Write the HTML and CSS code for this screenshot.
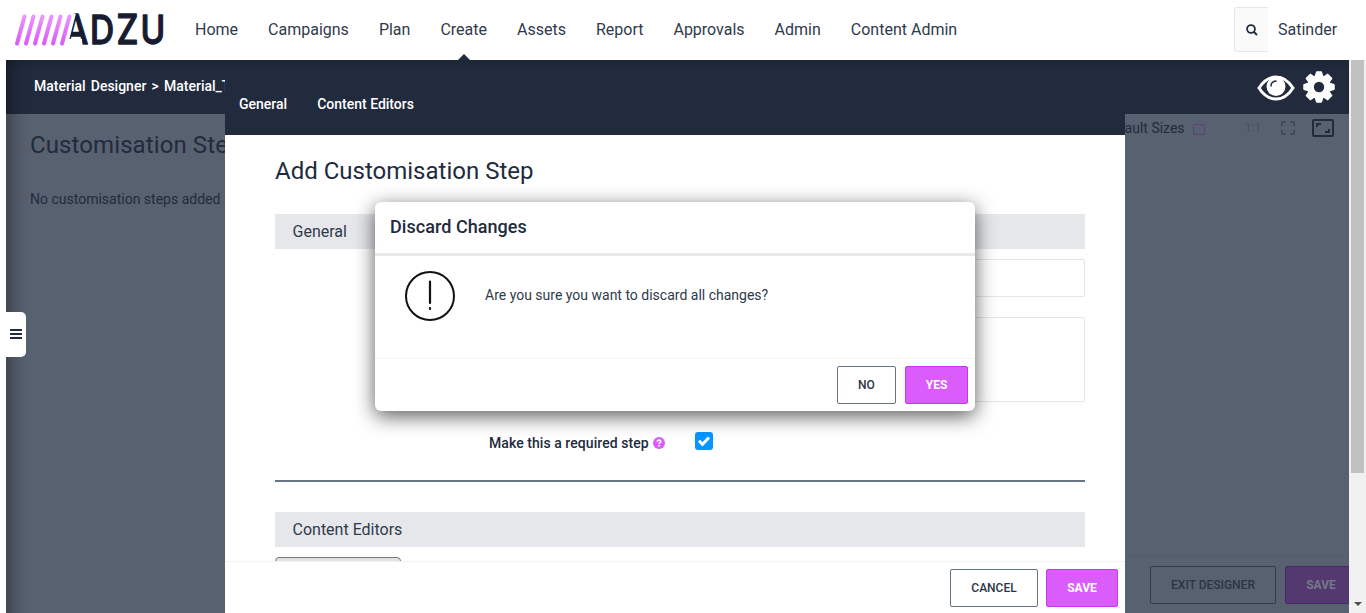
FILE: index.html
```html
<!DOCTYPE html>
<html lang="en">
<head>
<meta charset="utf-8">
<title>Adzu</title>
<link rel="stylesheet" href="styles.css">
</head>
<body>
<header class="header">
  <svg class="logo" width="154" height="34" viewBox="0 0 154 34">
    <defs><linearGradient id="pink" gradientUnits="userSpaceOnUse" x1="0" y1="2" x2="0" y2="32"><stop offset="0" stop-color="#ef96ff"/><stop offset="1" stop-color="#d957fa"/></linearGradient></defs>
    <g class="logo-text"><text transform="translate(49.500 31) scale(.92 1.060)">A</text><text transform="translate(76 31) scale(.88 1.060)">D</text><text transform="translate(102.500 31) scale(.9 1.060)">Z</text><text transform="translate(126.500 31) scale(.88 1.060)">U</text></g>
    <path d="M44 26H68V34H44Z" fill="#fff"/>
    <path d="M58.500 0L50.500 31" stroke="#fff" stroke-width="7"/>
    <path d="M10.500 3.500L3 30.500M19.500 3.500L12 30.500M28.500 3.500L21 30.500M37.500 3.500L30 30.500M46.500 3.500L39 30.500M55.500 3.500L48 30.500" fill="none" stroke="url(#pink)" stroke-width="4" stroke-linecap="round"/>
  </svg>
  <nav class="nav">
    <a>Home</a><a>Campaigns</a><a>Plan</a><a class="active">Create</a><a>Assets</a><a>Report</a><a>Approvals</a><a>Admin</a><a>Content Admin</a>
  </nav>
  <button class="search"><svg width="12" height="12" viewBox="0 0 12 12"><circle cx="5" cy="5" r="3.900"/><path d="M8 8l3 3"/></svg></button>
  <span class="user">Satinder</span>
</header>
<main class="main">
  <div class="workspace">
    <div class="topbar">
      <span class="crumbs">Material Designer &gt; Material_T</span>
      <svg class="eye" width="38" height="26" viewBox="0 0 38 26"><path d="M2 13Q9 2 19 2T36 13Q29 24 19 24T2 13Z" fill="none" stroke="#fff" stroke-width="3"/><circle cx="19" cy="11.500" r="9.500" fill="#fff"/><path d="M14 11Q14 6.500 19 6" fill="none" stroke="#212b3d" stroke-width="1.500" stroke-linecap="round"/></svg>
      <svg class="gear" width="32" height="32" viewBox="0 0 32 32"><g fill="#fff" stroke="#fff" stroke-linejoin="round"><circle cx="16" cy="16" r="11.500"/><path d="M12 6L13.500 .8H18.500L20 6V26L18.500 31.200H13.500L12 26Z"/><path d="M12 6L13 .8H19L20 6V26L19 31.200H13L12 26Z" transform="rotate(45 16 16)"/><path d="M12 6L13.500 .8H18.500L20 6V26L18.500 31.200H13.500L12 26Z" transform="rotate(90 16 16)"/><path d="M12 6L13 .8H19L20 6V26L19 31.200H13L12 26Z" transform="rotate(135 16 16)"/></g><circle cx="16" cy="16" r="5.200" fill="#212b3d"/></svg>
    </div>
    <div class="canvas">
      <div class="steps">
        <h2 class="steps-title">Customisation Steps</h2>
        <p class="steps-empty">No customisation steps added</p>
      </div>
      <div class="tools">
        <span class="sizes">Default Sizes</span><span class="size-check"></span><span class="ratio">1:1</span>
        <svg class="fit" width="14" height="14" viewBox="0 0 14 14"><path d="M1 5V1H5M9 1H13V5M13 9V13H9M5 13H1V9"/></svg>
        <svg class="frame" width="22" height="18" viewBox="0 0 22 18"><rect x="1" y="1" width="20" height="16" rx="1"/><path d="M5 8V5H9M17 10V13H13"/></svg>
      </div>
      <div class="canvas-foot"><button class="btn exit">EXIT DESIGNER</button><button class="btn dim-save">SAVE</button></div>
    </div>
    <button class="drawer"><i></i><i></i><i></i></button>
    <div class="edge"></div>
  </div>
  <div class="scrollbar"><div class="thumb"></div><div class="arrow"></div></div>
</main>
<section class="panel">
  <div class="tabs"><span>General</span><span>Content Editors</span></div>
  <div class="form">
    <h1 class="form-title">Add Customisation Step</h1>
    <h3 class="band">General</h3>
    <div class="fields"><div class="input"></div><div class="textarea"></div></div>
    <div class="required"><span class="required-label">Make this a required step</span>
      <svg class="help" width="12" height="12" viewBox="0 0 12 12"><circle cx="6" cy="6" r="6" fill="#da5cfb"/><path d="M4.200 4.600Q4.300 3 6 3T7.800 4.500Q7.800 5.400 6.800 5.900Q6 6.300 6 7" fill="none" stroke="#fff" stroke-width="1.600"/><rect x="5.200" y="8" width="1.600" height="1.600" fill="#fff"/></svg>
      <span class="check"><svg width="18" height="18" viewBox="0 0 18 18"><path d="M4 8.800L7.500 12.300L14 5.500"/></svg></span>
    </div>
    <h3 class="band second">Content Editors</h3>
    <div class="stub"></div>
  </div>
  <div class="panel-foot"><button class="btn cancel">CANCEL</button><button class="btn primary save">SAVE</button></div>
</section>
<section class="dialog">
  <h2 class="dialog-title">Discard Changes</h2>
  <div class="dialog-body">
    <svg width="50" height="50" viewBox="0 0 50 50"><circle cx="25" cy="25" r="24" fill="none" stroke="#111" stroke-width="2"/><path d="M25 10.500V32M25 37V38" stroke="#111" stroke-width="2.200" stroke-linecap="round"/></svg>
    <p>Are you sure you want to discard all changes?</p>
  </div>
  <div class="dialog-foot"><button class="btn no">NO</button><button class="btn primary yes">YES</button></div>
</section>
</body>
</html>
```
FILE: styles.css
```css
* { box-sizing: border-box; }
body { margin: 0; width: 1366px; height: 613px; overflow: hidden; position: relative; background: #fff; color: #212b3d; font-family: Roboto, sans-serif; font-size: 14px; }
h1, h2, h3, p { margin: 0; font-weight: 400; }
.header { height: 60px; display: flex; align-items: center; padding-left: 14px; }
.logo { flex: none; }
.logo-text { font: 500 38px Inter, sans-serif; fill: #171c30; stroke: #171c30; stroke-width: 1.200; stroke-linejoin: round; }
.nav { display: flex; gap: 30px; margin-left: 27px; height: 60px; line-height: 60px; font-size: 16px; color: #2f3a4c; white-space: nowrap; }
.active { position: relative; }
.active::after { content: ""; position: absolute; left: 50%; bottom: 0; margin-left: -6px; border: 6px solid transparent; border-top: 0; border-bottom-color: #212b3d; }
.search { width: 34px; height: 45px; margin: 0 0 2px auto; padding: 0; background: #fafafa; border: 1px solid #e7e7e9; border-right: 0; border-radius: 3px 0 0 3px; }
.search svg { fill: none; stroke: #212b3d; stroke-width: 1.800; vertical-align: middle; }
.user { width: 98px; padding: 0 0 2px 10px; font-size: 16px; color: #2f3a4c; }
.main { display: flex; height: 553px; padding-left: 6px; }
.workspace { width: 1343px; position: relative; overflow: hidden; display: flex; flex-direction: column; }
.topbar { height: 54px; flex: none; display: flex; align-items: center; background: linear-gradient(#1d2636, #212b3d 12px); color: #fff; padding: 0 14px 0 28px; }
.crumbs { width: 192px; overflow: hidden; white-space: nowrap; font-weight: 500; word-spacing: 1.700px; padding-bottom: 2px; }
.eye { margin-left: auto; margin-top: 2px; }
.gear { margin-left: 8px; }
.canvas { flex: 1; display: grid; grid-template-columns: 1fr auto; grid-template-rows: 1fr 58px; background: #586170; }
.steps { padding: 17px 24px; }
.steps-title { font-size: 24px; line-height: 28px; letter-spacing: .1px; }
.steps-empty { margin-top: 31px; line-height: 18px; }
.tools { display: flex; align-items: center; height: 28px; padding-right: 15px; }
.size-check { width: 12px; height: 11px; border: 1px solid #653b7b; border-radius: 2px; margin-left: 8px; margin-top: 2px; }
.ratio { font-size: 12px; color: #455061; margin-left: 40px; }
.fit { margin-left: 20px; fill: none; stroke: #414c5c; stroke-width: 2; }
.frame { margin-left: 17px; fill: none; stroke: #212b3d; stroke-width: 2; }
.canvas-foot { grid-column: 2; border-top: 1px solid #545d6c; display: flex; justify-content: flex-end; gap: 9px; padding-top: 10px; }
.btn { height: 38px; padding: 0; border: 1px solid #667286; border-radius: 2px; background: #fff; color: #2b3547; font: 500 12px Roboto, sans-serif; }
.primary { background: #da5cfb; border-color: #c935ed; color: #fff; font-weight: 700; }
.exit { width: 126px; background: none; border-color: #303b4d; }
.dim-save { width: 72px; margin-right: -8px; background: #533970; border-color: #49276a; color: #747887; font-weight: 700; }
.edge { position: absolute; inset: 0 0 -20px; margin-top: -20px; pointer-events: none; box-shadow: inset 12px 0 20px -8px rgba(0,0,0,.4); }
.drawer { position: absolute; z-index: 1; left: 0; top: 252px; width: 20px; height: 45px; padding: 0 4px 2px; display: flex; flex-direction: column; justify-content: center; gap: 2px; border: 0; border-radius: 0 5px 5px 0; background: #fff; }
.drawer i { height: 2px; width: 12px; background: #212b3d; }
.scrollbar { width: 17px; background: #f1f1f1; display: flex; flex-direction: column; align-items: center; }
.thumb { width: 13px; height: 413px; background: #c1c1c1; }
.arrow { margin-top: auto; margin-bottom: 7px; border: 4px solid transparent; border-bottom: 0; border-top-color: #505050; }
.panel { position: absolute; left: 225px; top: 60px; width: 900px; height: 553px; background: #fff; display: flex; flex-direction: column; overflow: hidden; }
.tabs { height: 75px; flex: none; display: flex; gap: 30px; padding: 35px 14px 0; line-height: 18px; background: linear-gradient(#1d2636, #212b3d 12px); color: #fff; font-weight: 500; }
.form { flex: 1; min-height: 0; overflow: hidden; padding: 22px 40px 0 50px; }
.form-title { font-size: 24px; line-height: 28px; }
.band { width: 810px; height: 35px; margin-top: 29px; padding-left: 17.500px; line-height: 35px; background: #e6e7eb; font-size: 16px; color: #2f3a4c; }
.fields { display: flex; flex-direction: column; gap: 20px; padding: 10px 0 0 420px; }
.input, .textarea { height: 38px; border: 1px solid #e5e5e8; border-radius: 2px; }
.textarea { height: 85px; }
.required { height: 80px; display: flex; align-items: flex-start; padding: 30px 0 0 214px; border-bottom: 2px solid #667286; line-height: 22px; font-weight: 500; }
.required-label { letter-spacing: .06px; }
.help { margin: 5px 0 0 4px; }
.check { width: 18px; height: 18px; margin-left: 30px; background: #0795ff; border-radius: 3px; line-height: 0; }
.check path { fill: none; stroke: #fff; stroke-width: 3; }
.second { margin-top: 30px; }
.stub { width: 126px; height: 30px; margin-top: 10px; border: 1px solid #737975; border-radius: 4px; background: #e1e2e1; }
.panel-foot { height: 52px; flex: none; display: flex; justify-content: flex-end; gap: 8px; padding: 7px 7px 0; border-top: 1px solid #f3f3f5; }
.cancel { width: 88px; }
.save { width: 72px; }
.dialog { position: absolute; left: 375px; top: 202px; width: 600px; height: 209px; border-radius: 6px; background: #fff; box-shadow: 0 5px 20px rgba(0,0,0,.65); display: flex; flex-direction: column; }
.dialog-title { height: 54px; padding: 0 15px; line-height: 50px; font-size: 18px; font-weight: 500; letter-spacing: .05px; border-bottom: 3px solid #e9e9e9; }
.dialog-body { flex: 1; display: flex; gap: 30px; padding: 15px 30px; color: #2f3a4c; }
.dialog-body p { line-height: 48px; }
.dialog-foot { height: 53px; display: flex; justify-content: flex-end; gap: 9px; padding: 7px; border-top: 1px solid #f5f5f7; }
.no { width: 59px; }
.yes { width: 63px; }
```
